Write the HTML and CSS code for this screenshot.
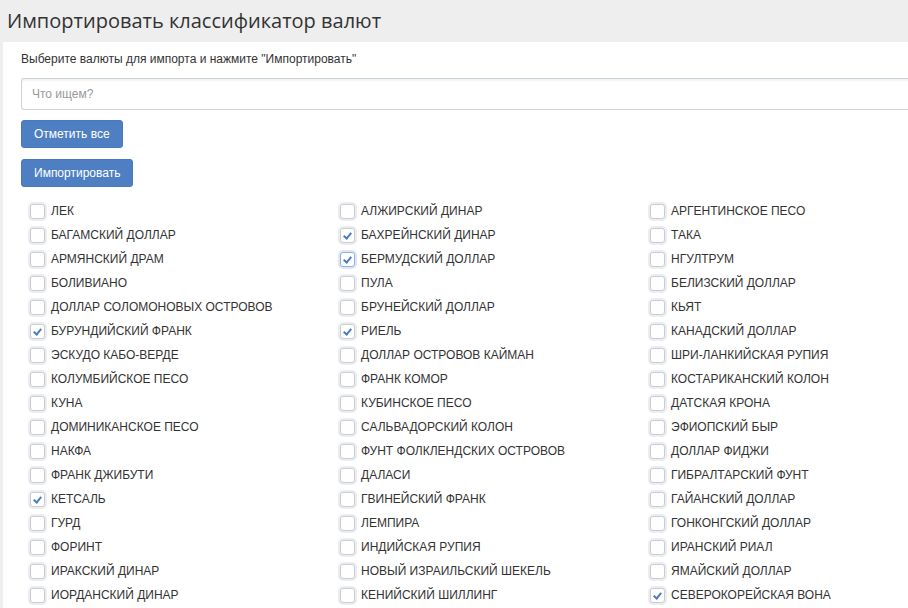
FILE: index.html
```html
<!DOCTYPE html>
<html lang="ru">
<head>
    <meta charset="UTF-8">
    <meta name="viewport" content="width=device-width, initial-scale=1.0">
    <title>Импортировать классификатор валют</title>
    <link rel="stylesheet" href="styles.css">
</head>
<body>

    <div class="page-header">
        <h1>Импортировать классификатор валют</h1>
    </div>

    <div class="panel">
        <p class="hint">Выберите валюты для импорта и нажмите "Импортировать"</p>
        <input type="text" class="search" placeholder="Что ищем?">

        <div class="actions">
            <button type="button" class="btn">Отметить все</button>
            <button type="button" class="btn">Импортировать</button>
        </div>

        <!-- Currency list, filled row by row -->
        <div class="currency-list">
            <label class="item"><input type="checkbox">ЛЕК</label>
            <label class="item"><input type="checkbox">АЛЖИРСКИЙ ДИНАР</label>
            <label class="item"><input type="checkbox">АРГЕНТИНСКОЕ ПЕСО</label>

            <label class="item"><input type="checkbox">БАГАМСКИЙ ДОЛЛАР</label>
            <label class="item"><input type="checkbox" checked>БАХРЕЙНСКИЙ ДИНАР</label>
            <label class="item"><input type="checkbox">ТАКА</label>

            <label class="item"><input type="checkbox">АРМЯНСКИЙ ДРАМ</label>
            <label class="item"><input type="checkbox" class="focused" checked>БЕРМУДСКИЙ ДОЛЛАР</label>
            <label class="item"><input type="checkbox">НГУЛТРУМ</label>

            <label class="item"><input type="checkbox">БОЛИВИАНО</label>
            <label class="item"><input type="checkbox">ПУЛА</label>
            <label class="item"><input type="checkbox">БЕЛИЗСКИЙ ДОЛЛАР</label>

            <label class="item"><input type="checkbox">ДОЛЛАР СОЛОМОНОВЫХ ОСТРОВОВ</label>
            <label class="item"><input type="checkbox">БРУНЕЙСКИЙ ДОЛЛАР</label>
            <label class="item"><input type="checkbox">КЬЯТ</label>

            <label class="item"><input type="checkbox" checked>БУРУНДИЙСКИЙ ФРАНК</label>
            <label class="item"><input type="checkbox" checked>РИЕЛЬ</label>
            <label class="item"><input type="checkbox">КАНАДСКИЙ ДОЛЛАР</label>

            <label class="item"><input type="checkbox">ЭСКУДО КАБО-ВЕРДЕ</label>
            <label class="item"><input type="checkbox">ДОЛЛАР ОСТРОВОВ КАЙМАН</label>
            <label class="item"><input type="checkbox">ШРИ-ЛАНКИЙСКАЯ РУПИЯ</label>

            <label class="item"><input type="checkbox">КОЛУМБИЙСКОЕ ПЕСО</label>
            <label class="item"><input type="checkbox">ФРАНК КОМОР</label>
            <label class="item"><input type="checkbox">КОСТАРИКАНСКИЙ КОЛОН</label>

            <label class="item"><input type="checkbox">КУНА</label>
            <label class="item"><input type="checkbox">КУБИНСКОЕ ПЕСО</label>
            <label class="item"><input type="checkbox">ДАТСКАЯ КРОНА</label>

            <label class="item"><input type="checkbox">ДОМИНИКАНСКОЕ ПЕСО</label>
            <label class="item"><input type="checkbox">САЛЬВАДОРСКИЙ КОЛОН</label>
            <label class="item"><input type="checkbox">ЭФИОПСКИЙ БЫР</label>

            <label class="item"><input type="checkbox">НАКФА</label>
            <label class="item"><input type="checkbox">ФУНТ ФОЛКЛЕНДСКИХ ОСТРОВОВ</label>
            <label class="item"><input type="checkbox">ДОЛЛАР ФИДЖИ</label>

            <label class="item"><input type="checkbox">ФРАНК ДЖИБУТИ</label>
            <label class="item"><input type="checkbox">ДАЛАСИ</label>
            <label class="item"><input type="checkbox">ГИБРАЛТАРСКИЙ ФУНТ</label>

            <label class="item"><input type="checkbox" checked>КЕТСАЛЬ</label>
            <label class="item"><input type="checkbox">ГВИНЕЙСКИЙ ФРАНК</label>
            <label class="item"><input type="checkbox">ГАЙАНСКИЙ ДОЛЛАР</label>

            <label class="item"><input type="checkbox">ГУРД</label>
            <label class="item"><input type="checkbox">ЛЕМПИРА</label>
            <label class="item"><input type="checkbox">ГОНКОНГСКИЙ ДОЛЛАР</label>

            <label class="item"><input type="checkbox">ФОРИНТ</label>
            <label class="item"><input type="checkbox">ИНДИЙСКАЯ РУПИЯ</label>
            <label class="item"><input type="checkbox">ИРАНСКИЙ РИАЛ</label>

            <label class="item"><input type="checkbox">ИРАКСКИЙ ДИНАР</label>
            <label class="item"><input type="checkbox">НОВЫЙ ИЗРАИЛЬСКИЙ ШЕКЕЛЬ</label>
            <label class="item"><input type="checkbox">ЯМАЙСКИЙ ДОЛЛАР</label>

            <label class="item"><input type="checkbox">ИОРДАНСКИЙ ДИНАР</label>
            <label class="item"><input type="checkbox">КЕНИЙСКИЙ ШИЛЛИНГ</label>
            <label class="item"><input type="checkbox" checked>СЕВЕРОКОРЕЙСКАЯ ВОНА</label>
        </div>
    </div>

</body>
</html>
```

FILE: styles.css
```css
body {
    margin: 0;
    background-color: #eeeeee;
    font-family: "Liberation Sans", Arial, sans-serif;
    font-size: 12px;
    color: #333;
    overflow-x: hidden;
}

.page-header {
    height: 42px;
    padding-left: 7px;
    display: flex;
    align-items: center;
}

.page-header h1 {
    margin: 0;
    margin-top: -2px;
    font-family: "Open Sans", sans-serif;
    font-size: 20px;
    font-weight: 400;
    color: #333;
}

.panel {
    margin-left: 3px;
    width: 920px;
    background-color: #fff;
    padding: 10px 0 6px 18px;
}

.hint {
    margin: 0 0 12px;
    line-height: 14px;
}

.search {
    display: block;
    box-sizing: border-box;
    width: 100%;
    height: 32px;
    padding: 0 10px;
    border: 1px solid #d0d4d9;
    border-top-color: #c9d2db;
    border-radius: 3px;
    box-shadow: inset 0 2px 2px rgba(0, 0, 0, 0.05);
    font-family: "Liberation Sans", Arial, sans-serif;
    font-size: 12px;
    color: #333;
    outline: none;
}

.search::placeholder {
    color: #999;
}

.actions {
    display: flex;
    flex-direction: column;
    align-items: flex-start;
    gap: 11px;
    margin-top: 10px;
}

.btn {
    height: 28px;
    padding: 0 12px;
    background-color: #4e7fc3;
    border: 1px solid #4a79bb;
    border-radius: 3px;
    font-family: "Liberation Sans", Arial, sans-serif;
    font-size: 12px;
    color: #fff;
    cursor: pointer;
}

.btn:hover {
    background-color: #4572b2;
}

.currency-list {
    display: grid;
    grid-template-columns: repeat(3, 310px);
    grid-auto-rows: 24px;
    margin-top: 12px;
    padding-left: 9px;
}

.item {
    display: flex;
    align-items: center;
    gap: 6px;
    white-space: nowrap;
    cursor: pointer;
}

.item input {
    appearance: none;
    -webkit-appearance: none;
    position: relative;
    box-sizing: border-box;
    width: 15px;
    height: 15px;
    margin: 0;
    border: 1px solid #ccc;
    border-radius: 3px;
    background: #fff;
    box-shadow: 0 0 0 2px #eaeef4;
    cursor: pointer;
}

.item input:checked::after {
    content: "";
    position: absolute;
    left: 4px;
    top: 2px;
    width: 3px;
    height: 6px;
    border-right: 2px solid #4a7cc0;
    border-bottom: 2px solid #4a7cc0;
    transform: rotate(40deg);
}

.item input.focused {
    border-color: #8fb0dc;
    box-shadow: 0 0 0 2px #dde8f6;
}
```
